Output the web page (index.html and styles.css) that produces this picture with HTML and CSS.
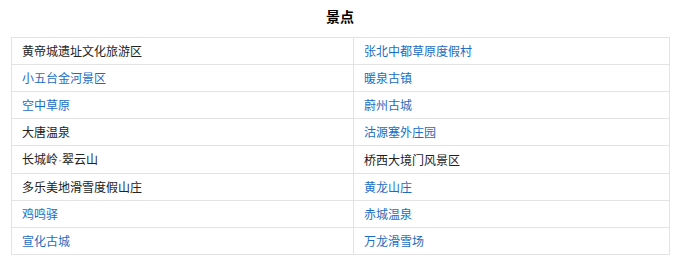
FILE: index.html
```html
<!DOCTYPE html>
<html lang="zh">
<head>
<meta charset="utf-8">
<link rel="stylesheet" href="styles.css">
</head>
<body>
<div class="wrap">
  <h3 class="title">景点</h3>
  <table class="spots">
    <colgroup><col class="c1"><col class="c2"></colgroup>
    <tr><td>黄帝城遗址文化旅游区</td><td><a class="lnk">张北中都草原度假村</a></td></tr>
    <tr><td><a class="lnk">小五台金河景区</a></td><td><a class="lnk">暖泉古镇</a></td></tr>
    <tr><td><a class="lnk">空中草原</a></td><td><a class="lnk">蔚州古城</a></td></tr>
    <tr><td>大唐温泉</td><td><a class="lnk">沽源塞外庄园</a></td></tr>
    <tr><td>长城岭<span class="dot">·</span>翠云山</td><td>桥西大境门风景区</td></tr>
    <tr><td>多乐美地滑雪度假山庄</td><td><a class="lnk">黄龙山庄</a></td></tr>
    <tr><td><a class="lnk">鸡鸣驿</a></td><td><a class="lnk">赤城温泉</a></td></tr>
    <tr><td><a class="lnk">宣化古城</a></td><td><a class="lnk">万龙滑雪场</a></td></tr>
  </table>
</div>
</body>
</html>
```
FILE: styles.css
```css
html, body {
  margin: 0;
  padding: 0;
  background: #fff;
}
body {
  font-family: "Noto Sans CJK SC", "Liberation Sans", sans-serif;
  color: #222;
}
.wrap {
  padding: 0 6px 0 11px;
}
.title {
  margin: 0;
  padding-top: 6px;
  height: 31px;
  line-height: 20px;
  font-size: 14px;
  font-weight: bold;
  text-align: center;
  color: #000;
}
.spots {
  border-collapse: collapse;
  width: 658px;
  table-layout: fixed;
  font-size: 12px;
}
.c1 { width: 342px; }
.c2 { width: 316px; }
.spots td {
  border: 1px solid #e3e3e3;
  padding: 0 0 0 10px;
  line-height: 26px;
  box-sizing: border-box;
  height: 27px;
  white-space: nowrap;
}
.dot {
  font-family: "Liberation Sans", sans-serif;
  color: #b8773a;
}
.lnk {
  color: #1a6dc2;
  text-decoration: none;
}
```
